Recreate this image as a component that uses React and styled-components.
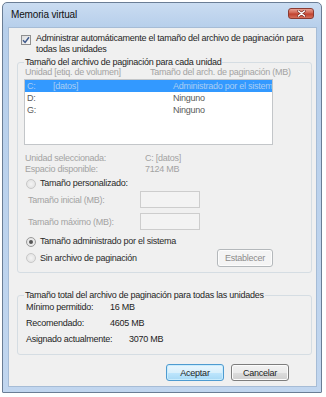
import React from 'react'
import styled, { createGlobalStyle } from 'styled-components'

const GlobalStyle = createGlobalStyle`
  html, body { margin: 0; padding: 0; background: #fff; }
  body {
    font-family: "Liberation Sans", Arial, sans-serif;
    font-size: 9px;
    letter-spacing: -0.25px;
    color: #1e1e1e;
  }
  * { box-sizing: border-box; }
`

const Window = styled.div`
  margin: 2px 0 0 2px;
  width: 320px;
  height: 391px;
  display: flex;
  flex-direction: column;
  border: 1px solid #6a7d95;
  border-radius: 5px 5px 1px 1px;
  background: linear-gradient(#cadcf1, #b7cfeb 24px, #c1d6ef);
  padding: 0 4px 5px 5px;
`

const TitleBar = styled.div`
  height: 24px;
  display: flex;
  align-items: flex-start;
  justify-content: space-between;
  padding: 0 3px 0 3px;
`

const Title = styled.span`
  font-size: 10px;
  letter-spacing: -0.15px;
  line-height: 24px;
  color: #111;
`

const CloseButton = styled.div`
  margin-top: 5px;
  width: 26px;
  height: 11px;
  border: 1px solid #8a3b32;
  border-radius: 3px;
  background: linear-gradient(#e8a194, #d0624f 45%, #c0412e 55%, #d5705c);
  display: flex;
  align-items: center;
  justify-content: center;
`

const Content = styled.div`
  flex: 1;
  display: flex;
  flex-direction: column;
  background: #f0f0f0;
  border: 1px solid #a6bcd6;
  padding-top: 5px;
`

const CheckRow = styled.label`
  display: flex;
  align-items: flex-start;
  gap: 5px;
  margin-left: 12px;
  line-height: 11px;
`

const CheckBox = styled.span`
  flex: none;
  width: 10px;
  height: 10px;
  margin-top: 2px;
  border: 1px solid #8f8f8f;
  background: linear-gradient(135deg, #dcdcdc, #fafafa);
  display: flex;
  align-items: center;
  justify-content: center;
`

const Group = styled.fieldset`
  margin: ${p => p.$top}px 4px 0 8px;
  min-inline-size: 0;
  border: 1px solid #d5dde3;
  border-radius: 3px;
  padding: 0 6px ${p => p.$bottom}px 6px;
`

const Legend = styled.legend`
  padding: 0 1px;
  line-height: ${p => p.$lh}px;
  color: #1e1e1e;
`

const Headers = styled.div`
  display: grid;
  grid-template-columns: 125px 1fr;
  padding-left: 1px;
  line-height: 11px;
  color: #a3a3a3;
  white-space: nowrap;
`

const ListBox = styled.div`
  margin-top: 1px;
  width: 249px;
  height: 66px;
  border: 1px solid #c3c6c9;
  background: #fff;
  overflow: hidden;
`

const ListRow = styled.div`
  display: grid;
  grid-template-columns: 26px 120px 1fr;
  height: 12px;
  line-height: 12px;
  padding-left: 2px;
  white-space: nowrap;
  overflow: hidden;
  background: ${p => (p.$selected ? '#3399ff' : 'transparent')};
  color: ${p => (p.$selected ? '#a9cdf3' : '#5a5a5a')};
`

const Info = styled.div`
  display: grid;
  grid-template-columns: 120px 1fr;
  padding-left: 1px;
  line-height: 11px;
  margin-top: ${p => p.$top || 0}px;
  color: #a3a3a3;
`

const RadioRow = styled.label`
  display: flex;
  align-items: center;
  gap: 4px;
  padding-left: 2px;
  line-height: 11px;
  margin-top: ${p => p.$top}px;
  color: #2a2a2a;
`

const Radio = styled.span`
  flex: none;
  width: 10px;
  height: 10px;
  border-radius: 50%;
  border: 1px solid ${p => (p.$checked ? '#9a9a9a' : '#c8c8c8')};
  background: radial-gradient(circle, #f4f4f4, #dedede);
  display: flex;
  align-items: center;
  justify-content: center;
  &::after {
    content: '';
    display: ${p => (p.$checked ? 'block' : 'none')};
    width: 4px;
    height: 4px;
    border-radius: 50%;
    background: #555;
  }
`

const FieldRow = styled.div`
  display: flex;
  align-items: center;
  height: 17px;
  padding-left: 4px;
  margin-top: ${p => p.$top}px;
  color: #a3a3a3;
`

const FieldLabel = styled.span`
  width: 112px;
`

const Field = styled.span`
  width: 60px;
  height: 17px;
  border: 1px solid #cdcdcd;
  background: #f3f3f3;
`

const SplitRow = styled.div`
  display: flex;
  align-items: center;
  justify-content: space-between;
  width: 249px;
  height: 18px;
  margin-top: 2px;
`

const Button = styled.button`
  width: ${p => p.$w}px;
  height: ${p => p.$h}px;
  padding: 0;
  font: inherit;
  letter-spacing: inherit;
  border-radius: 3px;
  border: 1px solid ${p => (p.$primary ? '#4e9bd0' : p.$disabled ? '#b4b8bb' : '#7d7d7d')};
  background: ${p =>
    p.$primary
      ? 'linear-gradient(#eaf6fd, #d9f0fc 50%, #bee6fd 51%, #a7d9f5)'
      : p.$disabled
      ? '#f4f4f4'
      : 'linear-gradient(#f2f2f2, #ebebeb 50%, #dddddd 51%, #cfcfcf)'};
  box-shadow: ${p => (p.$primary ? 'inset 0 0 0 1px #c9ecfd' : 'inset 0 0 0 1px #fcfcfc')};
  color: ${p => (p.$disabled ? '#8c8c8c' : '#1e1e1e')};
`

const TotalRow = styled.div`
  display: grid;
  grid-template-columns: ${p => p.$label}px auto;
  padding-left: 2px;
  line-height: 16px;
  color: #1e1e1e;
`

const Footer = styled.div`
  display: flex;
  justify-content: flex-end;
  gap: 7px;
  padding-right: 27px;
  margin-top: 9px;
`

function CloseGlyph() {
  return (
    <svg width="9" height="7" viewBox="0 0 9 7">
      <path d="M1.5 1 L7.5 6 M7.5 1 L1.5 6" stroke="#6b2018" strokeWidth="2.6" strokeLinecap="round" />
      <path d="M1.5 1 L7.5 6 M7.5 1 L1.5 6" stroke="#fff" strokeWidth="1.6" strokeLinecap="round" />
    </svg>
  )
}

function CheckMark() {
  return (
    <svg width="8" height="8" viewBox="0 0 8 8">
      <path d="M1 4.2 L3.1 6.4 L7 1.2" fill="none" stroke="#3f5a8c" strokeWidth="1.5" />
    </svg>
  )
}

const drives = [
  { id: 'C:', label: '[datos]', size: 'Administrado por el sistema', selected: true },
  { id: 'D:', label: '', size: 'Ninguno' },
  { id: 'G:', label: '', size: 'Ninguno' },
]

export default function App() {
  return (
    <>
      <GlobalStyle />
      <Window>
        <TitleBar>
          <Title>Memoria virtual</Title>
          <CloseButton>
            <CloseGlyph />
          </CloseButton>
        </TitleBar>
        <Content>
          <CheckRow>
            <CheckBox>
              <CheckMark />
            </CheckBox>
            <span>
              Administrar automáticamente el tamaño del archivo de paginación para
              <br />
              todas las unidades
            </span>
          </CheckRow>

          <Group $top={2} $bottom={5}>
            <Legend $lh={10}>Tamaño del archivo de paginación para cada unidad</Legend>
            <Headers>
              <span>Unidad [etiq. de volumen]</span>
              <span>Tamaño del arch. de paginación (MB)</span>
            </Headers>
            <ListBox>
              {drives.map(d => (
                <ListRow key={d.id} $selected={d.selected}>
                  <span>{d.id}</span>
                  <span>{d.label}</span>
                  <span>{d.size}</span>
                </ListRow>
              ))}
            </ListBox>
            <Info $top={8}>
              <span>Unidad seleccionada:</span>
              <span>C: [datos]</span>
            </Info>
            <Info>
              <span>Espacio disponible:</span>
              <span>7124 MB</span>
            </Info>
            <RadioRow $top={3}>
              <Radio />
              <span>Tamaño personalizado:</span>
            </RadioRow>
            <FieldRow $top={2}>
              <FieldLabel>Tamaño inicial (MB):</FieldLabel>
              <Field />
            </FieldRow>
            <FieldRow $top={5}>
              <FieldLabel>Tamaño máximo (MB):</FieldLabel>
              <Field />
            </FieldRow>
            <RadioRow $top={6}>
              <Radio $checked />
              <span>Tamaño administrado por el sistema</span>
            </RadioRow>
            <SplitRow>
              <RadioRow $top={0}>
                <Radio />
                <span>Sin archivo de paginación</span>
              </RadioRow>
              <Button $w={56} $h={18} $disabled>Establecer</Button>
            </SplitRow>
          </Group>

          <Group $top={18} $bottom={7}>
            <Legend $lh={8}>Tamaño total del archivo de paginación para todas las unidades</Legend>
            <TotalRow $label={84}>
              <span>Mínimo permitido:</span>
              <span>16 MB</span>
            </TotalRow>
            <TotalRow $label={84}>
              <span>Recomendado:</span>
              <span>4605 MB</span>
            </TotalRow>
            <TotalRow $label={103}>
              <span>Asignado actualmente:</span>
              <span>3070 MB</span>
            </TotalRow>
          </Group>

          <Footer>
            <Button $w={58} $h={17} $primary>Aceptar</Button>
            <Button $w={58} $h={17}>Cancelar</Button>
          </Footer>
        </Content>
      </Window>
    </>
  )
}
